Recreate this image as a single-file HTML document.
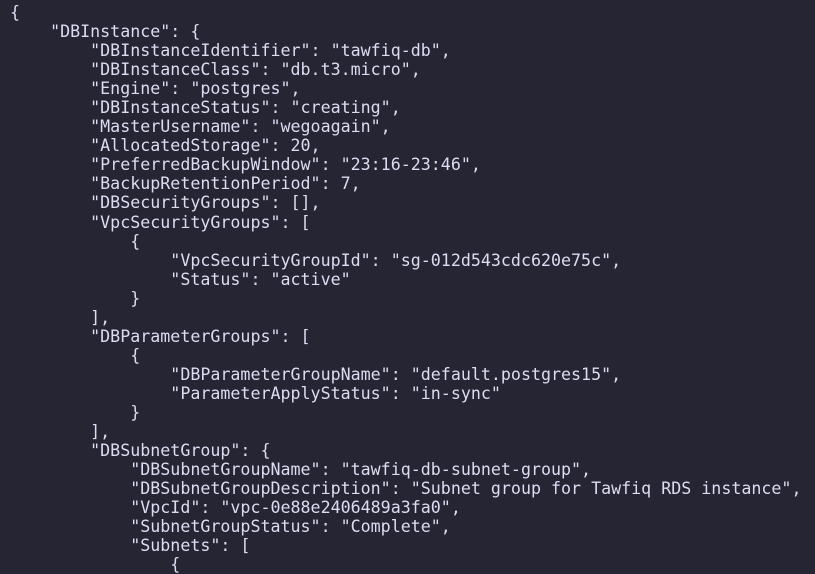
<!DOCTYPE html>
<html><head><meta charset="utf-8"><style>
html,body{margin:0;padding:0;background:#262534;width:815px;height:561px;overflow:hidden}
pre{margin:0;position:absolute;left:10px;top:3px;font-family:"DejaVu Sans Mono","Liberation Mono",monospace;font-size:16.65px;line-height:19.05px;color:#dcdcf2}
</style></head><body><pre>{
    "DBInstance": {
        "DBInstanceIdentifier": "tawfiq-db",
        "DBInstanceClass": "db.t3.micro",
        "Engine": "postgres",
        "DBInstanceStatus": "creating",
        "MasterUsername": "wegoagain",
        "AllocatedStorage": 20,
        "PreferredBackupWindow": "23:16-23:46",
        "BackupRetentionPeriod": 7,
        "DBSecurityGroups": [],
        "VpcSecurityGroups": [
            {
                "VpcSecurityGroupId": "sg-012d543cdc620e75c",
                "Status": "active"
            }
        ],
        "DBParameterGroups": [
            {
                "DBParameterGroupName": "default.postgres15",
                "ParameterApplyStatus": "in-sync"
            }
        ],
        "DBSubnetGroup": {
            "DBSubnetGroupName": "tawfiq-db-subnet-group",
            "DBSubnetGroupDescription": "Subnet group for Tawfiq RDS instance",
            "VpcId": "vpc-0e88e2406489a3fa0",
            "SubnetGroupStatus": "Complete",
            "Subnets": [
                {
</pre></body></html>
